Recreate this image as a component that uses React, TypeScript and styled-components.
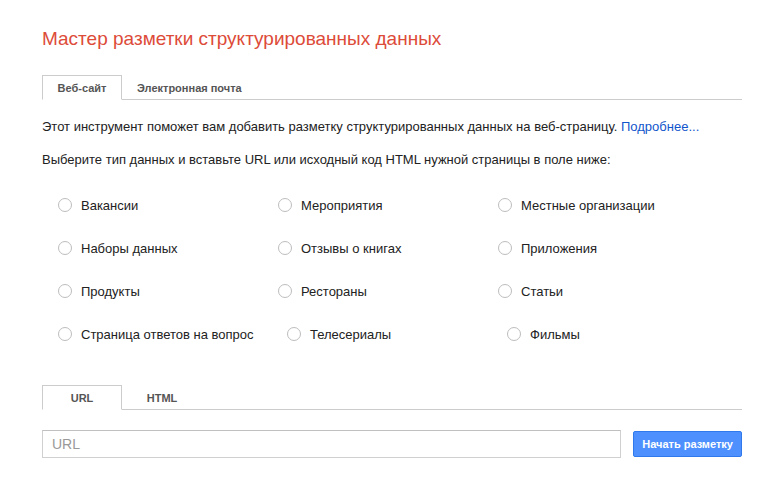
import React from "react";
import styled, { createGlobalStyle } from "styled-components";

const GlobalStyle = createGlobalStyle`
  html, body {
    margin: 0;
    padding: 0;
    background: #fff;
  }
  body {
    font-family: "Liberation Sans", Arial, sans-serif;
    color: #222;
  }
`;

const Page = styled.div`
  width: 700px;
  padding: 28px 0 0 42px;
`;

const Title = styled.h1`
  margin: 0;
  font-size: 19px;
  line-height: 22px;
  font-weight: normal;
  color: #dd4b39;
`;

const TabBar = styled.div<{ $top: number }>`
  display: flex;
  margin-top: ${(p) => p.$top}px;
  border-bottom: 1px solid #ccc;
`;

const Tab = styled.div<{ $active?: boolean }>`
  min-width: 80px;
  box-sizing: border-box;
  padding: 0 14px;
  height: 25px;
  line-height: 24px;
  margin-bottom: -1px;
  text-align: center;
  font-size: 11px;
  font-weight: bold;
  color: #555;
  border: 1px solid ${(p) => (p.$active ? "#ccc" : "transparent")};
  border-bottom-color: ${(p) => (p.$active ? "#fff" : "transparent")};
  background: ${(p) => (p.$active ? "#fff" : "transparent")};
  cursor: pointer;
`;

const Text = styled.p<{ $top: number }>`
  margin: ${(p) => p.$top}px 0 0;
  font-size: 13px;
  line-height: 16px;
  color: #222;
`;

const Link = styled.a`
  color: #15c;
  text-decoration: none;
`;

const TypeGrid = styled.div`
  display: grid;
  grid-template-columns: repeat(3, 220px);
  grid-auto-rows: 20px;
  row-gap: 23px;
  margin-top: 27px;
  padding-left: 16px;
`;

const TypeOption = styled.label<{ $nudge?: number }>`
  display: flex;
  align-items: center;
  gap: 9px;
  margin-left: ${(p) => p.$nudge ?? 0}px;
  font-size: 13px;
  color: #222;
  white-space: nowrap;
  cursor: pointer;
`;

const Radio = styled.span`
  width: 14px;
  height: 14px;
  box-sizing: border-box;
  border: 1px solid #bdbdbd;
  border-radius: 50%;
  background: #fff;
  flex-shrink: 0;
`;

const InputRow = styled.div`
  display: flex;
  align-items: center;
  gap: 12px;
  margin-top: 20px;
`;

const UrlInput = styled.input`
  flex: 1;
  height: 28px;
  box-sizing: border-box;
  border: 1px solid #d0d0d0;
  border-top-color: #c0c0c0;
  padding: 0 9px;
  font-family: "Liberation Sans", Arial, sans-serif;
  font-size: 14px;
  color: #222;
  outline: none;
  &::placeholder {
    color: #999;
  }
`;

const StartButton = styled.button`
  height: 26px;
  box-sizing: border-box;
  padding: 0 8px;
  border: 1px solid #3079ed;
  border-radius: 2px;
  background: #4d90fe;
  color: #fff;
  font-family: "Liberation Sans", Arial, sans-serif;
  font-size: 11px;
  font-weight: bold;
  cursor: pointer;
`;

const types: { label: string; nudge?: number }[] = [
  { label: "Вакансии" },
  { label: "Мероприятия" },
  { label: "Местные организации" },
  { label: "Наборы данных" },
  { label: "Отзывы о книгах" },
  { label: "Приложения" },
  { label: "Продукты" },
  { label: "Рестораны" },
  { label: "Статьи" },
  { label: "Страница ответов на вопрос" },
  { label: "Телесериалы", nudge: 9 },
  { label: "Фильмы", nudge: 9 },
];

export default function App() {
  return (
    <>
      <GlobalStyle />
      <Page>
        <Title>Мастер разметки структурированных данных</Title>

        <TabBar $top={25}>
          <Tab $active>Веб-сайт</Tab>
          <Tab>Электронная почта</Tab>
        </TabBar>

        <Text $top={19}>
          Этот инструмент поможет вам добавить разметку структурированных данных на веб-страницу.{" "}
          <Link href="#">Подробнее...</Link>
        </Text>
        <Text $top={17}>
          Выберите тип данных и вставьте URL или исходный код HTML нужной страницы в поле ниже:
        </Text>

        <TypeGrid>
          {types.map((t) => (
            <TypeOption key={t.label} $nudge={t.nudge}>
              <Radio />
              {t.label}
            </TypeOption>
          ))}
        </TypeGrid>

        <TabBar $top={41}>
          <Tab $active>URL</Tab>
          <Tab>HTML</Tab>
        </TabBar>

        <InputRow>
          <UrlInput placeholder="URL" />
          <StartButton>Начать разметку</StartButton>
        </InputRow>
      </Page>
    </>
  );
}
